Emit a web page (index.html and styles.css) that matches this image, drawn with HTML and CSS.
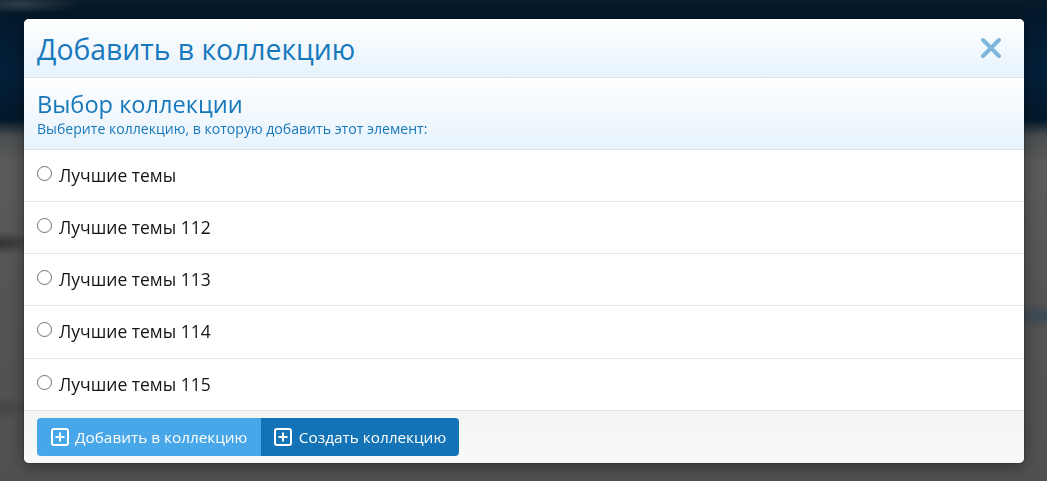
FILE: index.html
```html
<!DOCTYPE html>
<html lang="ru">
<head>
<meta charset="utf-8">
<title>Добавить в коллекцию</title>
<link rel="stylesheet" href="styles.css">
</head>
<body>
<div class="backdrop"></div>
<div class="overlay">
  <form class="dialog">
    <header class="dialog-title">
      <h1>Добавить в коллекцию</h1>
      <svg class="close" width="22" height="22" viewBox="0 0 22 22"><path d="M3 3 L19 19 M19 3 L3 19" stroke="#7fb6dd" stroke-width="4" stroke-linecap="round"/></svg>
    </header>
    <div class="section-head">
      <h2>Выбор коллекции</h2>
      <p>Выберите коллекцию, в которую добавить этот элемент:</p>
    </div>
    <ul class="rows">
      <li><label><span class="radio"></span>Лучшие темы</label></li>
      <li><label><span class="radio"></span>Лучшие темы 112</label></li>
      <li><label><span class="radio"></span>Лучшие темы 113</label></li>
      <li><label><span class="radio"></span>Лучшие темы 114</label></li>
      <li><label><span class="radio"></span>Лучшие темы 115</label></li>
    </ul>
    <footer class="actions">
      <button type="button" class="btn btn-light"><svg width="18" height="18" viewBox="0 0 18 18"><rect x="1" y="1" width="16" height="16" rx="2" fill="none" stroke="#fff" stroke-width="2"/><path d="M9 4.5V13.5M4.5 9H13.5" stroke="#fff" stroke-width="2"/></svg>Добавить в коллекцию</button>
      <button type="button" class="btn btn-dark"><svg width="18" height="18" viewBox="0 0 18 18"><rect x="1" y="1" width="16" height="16" rx="2" fill="none" stroke="#fff" stroke-width="2"/><path d="M9 4.5V13.5M4.5 9H13.5" stroke="#fff" stroke-width="2"/></svg>Создать коллекцию</button>
    </footer>
  </form>
</div>
</body>
</html>
```
FILE: styles.css
```css
* { box-sizing: border-box; }
html, body { margin: 0; height: 100%; overflow: hidden; }
body {
  background: #555;
  font-family: "Open Sans", "Noto Sans", sans-serif;
}
.backdrop {
  position: fixed;
  inset: 0;
  background:
    radial-gradient(ellipse 60px 10px at 20px 4px, rgba(120,130,140,.35), transparent),
    radial-gradient(ellipse 50px 14px at 1047px 316px, rgba(50,70,85,.8), transparent),
    radial-gradient(ellipse 40px 12px at 0 243px, rgba(40,40,40,.8), transparent),
    radial-gradient(ellipse 40px 12px at 0 408px, rgba(60,60,60,.6), transparent),
    linear-gradient(180deg, #0a1a27 0, #03192b 12px, #03203a 70px, #03192b 120px, #4a4e50 136px, #5b5b5b 165px, #545454 300px, #505050 481px);
}
.overlay {
  position: relative;
  padding: 19px 23px 0 24px;
}
.dialog {
  background: #fff;
  border-radius: 5px;
  overflow: hidden;
  box-shadow: 0 0 0 1px rgba(0,0,0,.12), 0 3px 16px rgba(0,0,0,.4);
}
.dialog-title, .section-head {
  background: linear-gradient(180deg, #fff 0%, #e6f2fc 100%);
  border-bottom: 1px solid #dfe3e6;
  color: #1778bb;
}
.dialog-title {
  height: 59px;
  padding: 0 22px 0 13px;
  display: flex;
  align-items: center;
  justify-content: space-between;
}
h1 { margin: 2px 0 0; font-size: 28.35px; font-weight: 400; line-height: 1; }
.section-head { height: 72px; padding: 12px 13px 0; }
h2 { margin: 0; font-size: 23.6px; font-weight: 400; line-height: 28px; }
.section-head p { margin: 3px 0 0; font-size: 14.08px; line-height: 16px; }
.rows { list-style: none; margin: 0; padding: 0; }
.rows li {
  height: 52.15px;
  border-bottom: 1px solid #e5e5e5;
  padding: 0 13px 1px;
  display: flex;
  align-items: center;
  color: #141414;
  font-size: 17.5px;
}
.rows label { display: flex; align-items: center; }
.radio {
  width: 15px;
  height: 15px;
  border: 1px solid #6f6f6f;
  border-radius: 50%;
  margin: -3px 7px 0 0;
  background: #fff;
}
.actions {
  height: 52.25px;
  background: linear-gradient(180deg, #f4f4f4, #f9f9f9);
  padding: 7px 13px 0;
  display: flex;
  align-items: flex-start;
}
.btn {
  height: 38px;
  border: 0;
  color: #fff;
  font: 15.35px "Open Sans", "Noto Sans", sans-serif;
  display: flex;
  align-items: center;
  gap: 6.5px;
  padding: 0 13.5px;
}
.btn-light { background: #47a7e8; border-radius: 4px 0 0 4px; }
.btn-dark { background: #1373b6; border-radius: 0 4px 4px 0; padding-right: 13px; }
```
